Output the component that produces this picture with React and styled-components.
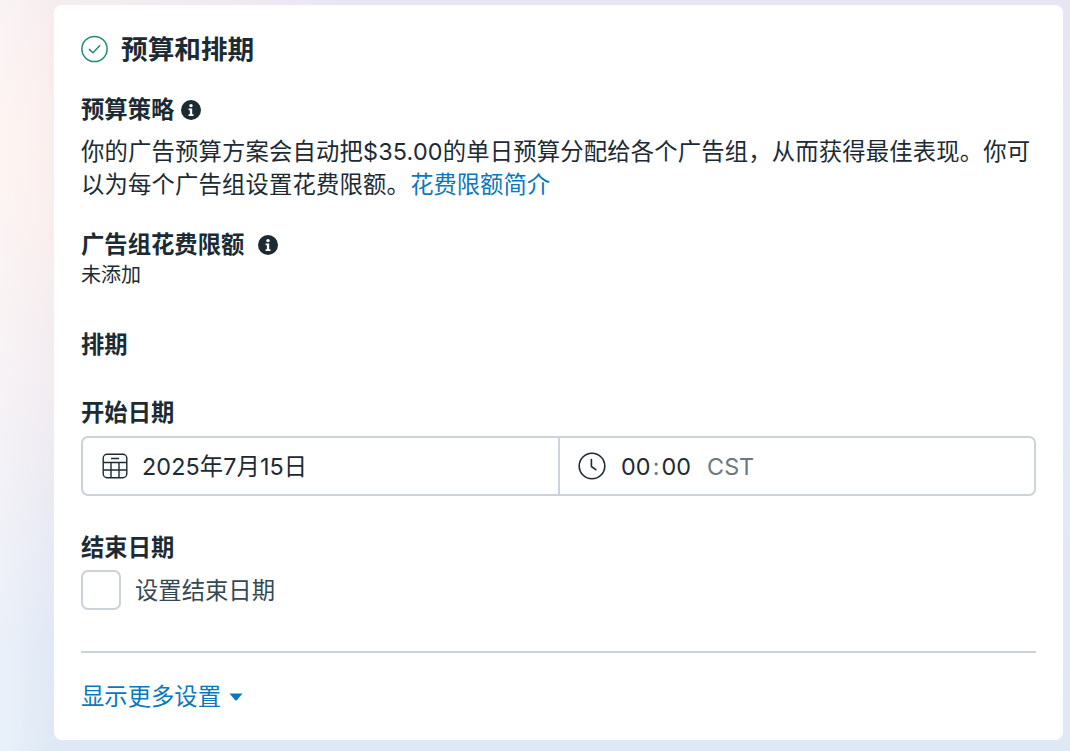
import styled, { createGlobalStyle } from 'styled-components';

const GlobalStyle = createGlobalStyle`
  html, body {
    margin: 0;
    height: 100%;
    overflow: hidden;
  }
  body {
    font-family: "Inter", "Noto Sans CJK SC", sans-serif;
    color: #1c2b33;
  }
`;

function InfoIcon() {
  return (
    <InfoSvg viewBox="0 0 20 20">
      <circle cx="10" cy="10" r="10" fill="#1c2b33" />
      <circle cx="10" cy="5.6" r="1.7" fill="#fff" />
      <path d="M7.6 8.6h3.6v5.6h1.3v1.7H7.6v-1.7h1.3v-3.9H7.6z" fill="#fff" />
    </InfoSvg>
  );
}

export default function App() {
  return (
    <Page>
      <GlobalStyle />
      <Card>
        <Header>
          <svg width="28" height="28" viewBox="0 0 28 28" fill="none">
            <circle cx="13.5" cy="14" r="12.6" stroke="#1f8f63" strokeWidth="1.5" />
            <path d="M8.3 14.4l3.6 3.4 6.8-7" stroke="#1f8f63" strokeWidth="1.5" strokeLinecap="round" strokeLinejoin="round" />
          </svg>
          <Title>预算和排期</Title>
        </Header>

        <Label $top={28}>预算策略 <InfoIcon /></Label>
        <Paragraph>
          你的广告预算方案会自动把$35.00的单日预算分配给各个广告组，从而获得最佳表现。你可以为每个广告组设置花费限额。<Link>花费限额简介</Link>
        </Paragraph>

        <Label $top={28}>广告组花费限额<Spacer /><InfoIcon /></Label>
        <SmallText>未添加</SmallText>

        <Label $top={40}>排期</Label>

        <Label $top={38}>开始日期</Label>
        <DateField>
          <DatePart>
            <svg width="26" height="26" viewBox="0 0 26 26" fill="none" stroke="#1c2b33" strokeWidth="1.4">
              <rect x="1.2" y="1.2" width="23.6" height="23.6" rx="4" />
              <path d="M1.2 9.5h23.6M1.2 17h23.6M9 9.5v15.3M17 9.5v15.3M9 5.5h8" />
            </svg>
            <FieldText>2025年7月15日</FieldText>
          </DatePart>
          <TimePart>
            <svg width="28" height="28" viewBox="0 0 28 28" fill="none" stroke="#1c2b33" strokeWidth="1.6" strokeLinecap="round" strokeLinejoin="round">
              <circle cx="14" cy="14" r="12.8" />
              <path d="M13.4 7.5v7l4.4 3.2" />
            </svg>
            <FieldText>00<Colon>:</Colon>00</FieldText>
            <Zone>CST</Zone>
          </TimePart>
        </DateField>

        <Label $top={37}>结束日期</Label>
        <CheckRow>
          <CheckBox />
          <CheckLabel>设置结束日期</CheckLabel>
        </CheckRow>

        <Divider />

        <MoreLink>
          显示更多设置
          <svg width="14" height="8" viewBox="0 0 14 8"><path d="M0.5 0.5h13L8 7a1.4 1.4 0 0 1-2 0z" fill="#0a78be" /></svg>
        </MoreLink>
      </Card>
    </Page>
  );
}

const Page = styled.div`
  height: 751px;
  box-sizing: border-box;
  padding: 5px 7px 11px 54px;
  background:
    linear-gradient(90deg, rgba(255, 255, 255, 0.35) 0, rgba(255, 255, 255, 0) 54px),
    radial-gradient(ellipse 360px 500px at 0 150px, #fdf0ec 0%, rgba(253, 240, 236, 0) 100%),
    linear-gradient(180deg, #e9e6f4 0%, #e6e8f6 45%, #dee9f5 100%);
`;

const Card = styled.div`
  height: 735px;
  box-sizing: border-box;
  padding: 26px 27px 0;
  background: #fff;
  border-radius: 8px;
`;

const Header = styled.div`
  display: flex;
  align-items: center;
  gap: 12px;
  height: 36px;
`;

const Title = styled.h2`
  margin: 0;
  font-size: 26.67px;
  line-height: 36px;
  font-weight: 700;
  color: #1c2b33;
`;

const Label = styled.div`
  display: flex;
  align-items: center;
  gap: 7px;
  margin-top: ${(p) => p.$top}px;
  font-size: 23.33px;
  line-height: 30px;
  font-weight: 600;
`;

const InfoSvg = styled.svg`
  width: 20px;
  height: 20px;
  flex: none;
`;

const Spacer = styled.span`
  width: 0;
`;

const Paragraph = styled.p`
  margin: 10px 0 0;
  font-size: 23.33px;
  line-height: 33.4px;
  letter-spacing: 0.18px;
`;

const Link = styled.a`
  color: #0a78be;
  letter-spacing: 0;
`;

const SmallText = styled.div`
  font-size: 20px;
  line-height: 30px;
`;

const DateField = styled.div`
  display: flex;
  height: 60px;
  margin-top: 8px;
  box-sizing: border-box;
  border: 2px solid #cbd2d9;
  border-radius: 7px;
`;

const DatePart = styled.div`
  display: flex;
  flex: 1;
  align-items: center;
  gap: 14px;
  padding-left: 19px;
`;

const TimePart = styled(DatePart)`
  gap: 15px;
  padding-left: 18px;
  border-left: 2px solid #cbd2e0;
`;

const FieldText = styled.span`
  padding-top: 2px;
  font-size: 23.33px;
  line-height: 30px;
  letter-spacing: 0.1px;
`;

const Colon = styled.span`
  margin: 0 2px;
  color: #67788a;
`;

const Zone = styled.span`
  margin-left: 1px;
  padding-top: 2px;
  font-size: 23.33px;
  color: #6b7880;
`;

const CheckRow = styled.div`
  display: flex;
  align-items: center;
  gap: 14px;
  margin-top: 7px;
`;

const CheckBox = styled.div`
  width: 40px;
  height: 40px;
  box-sizing: border-box;
  border: 2px solid #cbd2d9;
  border-radius: 7px;
`;

const CheckLabel = styled.span`
  padding-top: 1px;
  font-size: 23.33px;
  line-height: 40px;
  color: #344854;
`;

const Divider = styled.div`
  height: 2px;
  margin-top: 40px;
  background: #cbd2d9;
`;

const MoreLink = styled.a`
  display: flex;
  align-items: center;
  gap: 8px;
  margin-top: 28px;
  font-size: 23.33px;
  line-height: 32px;
  color: #0a78be;
`;
